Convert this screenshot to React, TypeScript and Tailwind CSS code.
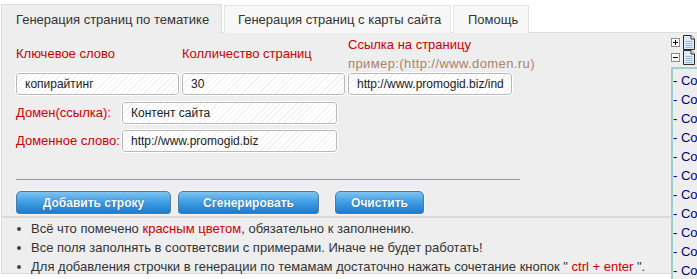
import React from 'react';

const font = { fontFamily: '"Liberation Sans", Arial, sans-serif' };

const inputCls =
  'h-[22px] shrink-0 rounded-[3px] border border-[#b8b8b8] bg-[repeating-linear-gradient(135deg,#ffffff_0px,#ffffff_3px,#f1f1f1_3px,#f1f1f1_4px)] pl-[8px] text-[12px] text-[#222] leading-[20px] outline outline-1 outline-white';

function Field({ value, className = '' }: { value: string; className?: string }) {
  return <div className={`${inputCls} ${className} overflow-hidden whitespace-nowrap`}>{value}</div>;
}

function BlueButton({ label, width }: { label: string; width: string }) {
  return (
    <button
      className={`${width} h-[23px] rounded-t-[5px] rounded-b-[3px] border border-[#4a7cab] bg-gradient-to-b from-[#7cc3f2] via-[#3d9ce2] to-[#1f7bcc] text-[12px] font-bold text-white [text-shadow:0_0_1px_#0d4f8a] shadow-[0_0_0_1px_#f4f4f4]`}
    >
      {label}
    </button>
  );
}

function DocIcon() {
  return (
    <svg width="12" height="15" viewBox="0 0 12 15">
      <path d="M0.5 0.5h7.5l3.5 3.5v10.5h-11z" fill="#dfeaf6" stroke="#2b2b2b" strokeWidth="1" />
      <path d="M8 0.5v3.5h3.5" fill="#ffffff" stroke="#2b2b2b" strokeWidth="1" />
      <path d="M2.5 6.5h7M2.5 8.5h7M2.5 10.5h7M2.5 12.5h7" stroke="#9db6d6" strokeWidth="1" />
    </svg>
  );
}

function TreeBox({ sign }: { sign: '+' | '-' }) {
  return (
    <div className="w-[9px] h-[9px] border border-[#8a8a8a] bg-white flex items-center justify-center relative">
      <div className="w-[5px] h-[1px] bg-black" />
      {sign === '+' && <div className="absolute w-[1px] h-[5px] bg-black" />}
    </div>
  );
}

export default function App() {
  const notes = [
    <>
      Всё что помечено <span className="text-[#cc0000]">красным цветом</span>, обязательно к заполнению.
    </>,
    <>Все поля заполнять в соответсвии с примерами. Иначе не будет работать!</>,
    <>
      Для добавления строчки в генерации по темамам достаточно нажать сочетание кнопок "{' '}
      <span className="text-[#cc0000]">ctrl + enter</span> ".
    </>,
  ];

  return (
    <div className="w-[697px] h-[279px] bg-white overflow-hidden" style={font}>
      {/* Tabs */}
      <div className="flex items-end pt-[4px] pl-[1px] gap-[2px] h-[33px]">
        <div className="w-[221px] h-[29px] bg-[#eeeeee] border-t border-l border-r border-[#dcdcdc] pl-[14px] text-[13px] text-[#333] leading-[29px] relative z-10">
          Генерация страниц по тематике
        </div>
        <div className="w-[227px] h-[28px] bg-[#f7f7f7] border-t border-l border-r border-[#e4e4e4] pl-[13px] text-[13px] text-[#333] leading-[28px]">
          Генерация страниц с карты сайта
        </div>
        <div className="w-[76px] h-[28px] bg-[#f7f7f7] border-t border-l border-r border-[#e4e4e4] pl-[14px] text-[13px] text-[#333] leading-[28px]">
          Помощь
        </div>
      </div>

      {/* Panel */}
      <div className="-mt-[1px] ml-[1px] h-[242px] bg-[#eeeeee] border-t border-l border-b border-[#dcdcdc] flex">
        <div className="w-[669px] shrink-0 flex flex-col">
          {/* Labels */}
          <div className="shrink-0 flex pl-[14px] h-[40px] pt-[2px] text-[13px]">
            <div className="w-[166px] flex items-center text-[#cc0000]">Ключевое слово</div>
            <div className="w-[166px] flex items-center text-[#cc0000]">Колличество страниц</div>
            <div className="flex flex-col leading-[19px]">
              <span className="text-[#cc0000]">Ссылка на страницу</span>
              <span className="text-[#a8846a] tracking-[0.4px]">пример:(http://www.domen.ru)</span>
            </div>
          </div>

          <div className="shrink-0 flex pl-[14px] gap-[3px]">
            <Field value="копирайтинг" className="w-[163px]" />
            <Field value="30" className="w-[163px]" />
            <Field value="http://www.promogid.biz/ind" className="w-[164px]" />
          </div>

          <div className="shrink-0 flex items-center pl-[14px] mt-[7px] text-[13px]">
            <span className="w-[106px] text-[#cc0000]">Домен(ссылка):</span>
            <Field value="Контент сайта" className="w-[215px]" />
          </div>
          <div className="shrink-0 flex items-center pl-[14px] mt-[6px] text-[13px]">
            <span className="w-[106px] text-[#cc0000]">Доменное слово:</span>
            <Field value="http://www.promogid.biz" className="w-[215px]" />
          </div>

          <div className="shrink-0 ml-[14px] mt-[27px] w-[504px] h-[1px] bg-[#9d97ab]" />

          <div className="shrink-0 flex pl-[14px] mt-[11px] gap-[7px]">
            <BlueButton label="Добавить строку" width="w-[155px]" />
            <BlueButton label="Сгенерировать" width="w-[141px]" />
            <BlueButton label="Очистить" width="w-[89px] ml-[9px]" />
          </div>

          <div className="shrink-0 mt-[2px] h-[2px] bg-[#dadada]" />

          <ul className="shrink-0 pl-[15px] pt-[1px] text-[13px] text-[#333] leading-[19px]">
            {notes.map((n, i) => (
              <li key={i} className="flex items-center whitespace-nowrap">
                <span className="w-[4px] h-[4px] rounded-full bg-[#444] mr-[10px] shrink-0" />
                <span>{n}</span>
              </li>
            ))}
          </ul>
        </div>

        {/* Right tree */}
        <div className="flex-1 min-w-0 flex flex-col">
          <div className="flex items-center gap-[3px] h-[17px] mt-[2px]">
            <TreeBox sign="+" />
            <DocIcon />
          </div>
          <div className="flex items-center gap-[3px] h-[17px]">
            <TreeBox sign="-" />
            <DocIcon />
          </div>
          <div className="mt-[2px] h-[220px] shrink-0 bg-[#eeeeee] border-t-[2px] border-l-[2px] border-[#9fd0d0] pt-[2px] text-[13px] text-[#000080] leading-[19px] whitespace-nowrap overflow-hidden">
            {Array.from({ length: 11 }).map((_, i) => (
              <div key={i}>- Co</div>
            ))}
          </div>
        </div>
      </div>
    </div>
  );
}
